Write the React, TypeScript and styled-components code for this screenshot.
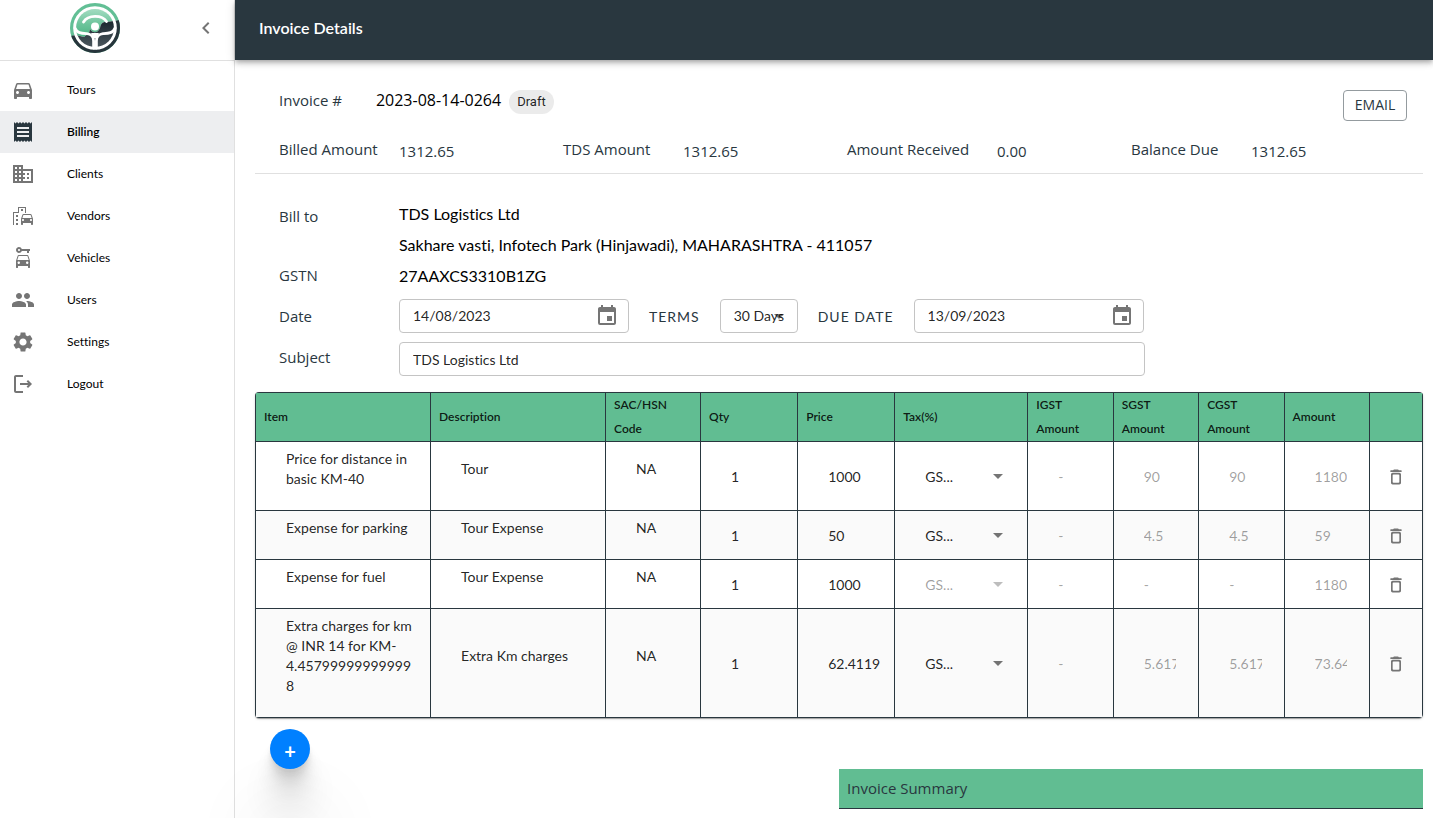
import React from "react";
import styled, { createGlobalStyle, css } from "styled-components";
import {
  MdArrowDropDown,
  MdCarRental,
  MdChevronLeft,
  MdDirectionsCar,
  MdDomain,
  MdEmojiTransportation,
  MdEvent,
  MdPeople,
  MdReceipt,
  MdSettings,
} from "react-icons/md";

const ink = "#29373f";
const green = "#61bd92";
const grey = "#757575";
const lato = `Lato, "Liberation Sans", sans-serif`;
const humanist = `"Open Sans", "Noto Sans", sans-serif`;

const GlobalStyle = createGlobalStyle`
  *, *::before, *::after { box-sizing: border-box; }
  body {
    margin: 0;
    background: #fff;
    color: rgba(0, 0, 0, 0.87);
    font-family: ${lato};
    font-variant-ligatures: none;
  }
  button, input, select {
    margin: 0;
    color: inherit;
    font-family: inherit;
    font-variant-ligatures: none;
  }
`;

const Shell = styled.div`
  display: flex;
  min-height: 100vh;
`;

const Sidebar = styled.aside`
  flex: 0 0 235px;
  border-right: 1px solid #e0e0e0;
`;

const Brand = styled.div`
  display: flex;
  align-items: flex-start;
  justify-content: flex-end;
  gap: 74px;
  height: 61px;
  padding: 3px 16px 0 0;
  border-bottom: 1px solid #e0e0e0;
`;

const CollapseButton = styled.button`
  display: flex;
  padding: 13px 0;
  border: 0;
  background: none;
  color: ${grey};
  font-size: 24px;
`;

const Nav = styled.nav`
  padding-top: 8px;
`;

const NavLink = styled.a<{ $active?: boolean }>`
  display: flex;
  align-items: center;
  gap: 32px;
  height: 42px;
  padding-left: 11px;
  color: #000;
  font-size: 12px;
  font-weight: ${(p) => (p.$active ? 600 : 400)};
  text-decoration: none;
  background: ${(p) => (p.$active ? "#edeef0" : "transparent")};

  svg {
    width: 24px;
    height: 24px;
    color: ${(p) => (p.$active ? ink : grey)};
  }
`;

const NavText = styled.span`
  padding-bottom: 2px;
`;

const Main = styled.main`
  flex: 1;
  min-width: 0;
`;

const TopBar = styled.header`
  position: relative;
  display: flex;
  align-items: center;
  height: 60px;
  padding: 0 24px 5px;
  background: ${ink};
  color: #fff;
  box-shadow: 0 2px 4px -1px rgba(0, 0, 0, 0.2), 0 4px 5px rgba(0, 0, 0, 0.14),
    0 1px 10px rgba(0, 0, 0, 0.12);
`;

const Title = styled.h1`
  margin: 0;
  font-size: 16px;
  font-weight: 600;
`;

const Content = styled.div`
  padding: 26px 10px 9px 20px;
`;

const InvoiceHead = styled.section`
  padding: 0 8px 0 24px;
  border-bottom: 1px solid #e0e0e0;
`;

const IdRow = styled.div`
  display: flex;
  align-items: flex-start;
  padding: 4px 8px 8px 0;
`;

const Label = styled.span`
  font-family: ${humanist};
  font-size: 15px;
  line-height: 24px;
  color: ${ink};
`;

const FieldLabel = styled(Label).attrs({ as: "label" })<{ htmlFor?: string }>``;

const InvoiceLabel = styled(Label)`
  line-height: 20px;
`;

const InvoiceNumber = styled(InvoiceLabel)`
  margin: 0 8px 0 34px;
  font-size: 16px;
  color: #000;
`;

const Chip = styled.span`
  height: 24px;
  padding: 0 8px;
  border-radius: 12px;
  background: #ebebeb;
  font-family: Roboto, sans-serif;
  font-size: 13px;
  line-height: 24px;
`;

const EmailButton = styled.button`
  width: 64px;
  height: 31px;
  margin-left: auto;
  padding: 0 0 2px;
  border: 1px solid #949b9f;
  border-radius: 4px;
  background: #fff;
  color: ${ink};
  font-family: ${humanist};
  font-size: 14px;
`;

const Totals = styled.div`
  display: grid;
  grid-template-columns: repeat(4, 1fr);
  height: 44px;
  padding-top: 8px;
`;

const Total = styled.div<{ $labelWidth: number }>`
  display: grid;
  grid-template-columns: ${(p) => p.$labelWidth}px 1fr;
`;

const TotalValue = styled(Label)`
  padding-top: 2px;
`;

const Details = styled.section`
  display: grid;
  grid-template-columns: 120px minmax(0, 746px);
  padding: 24px 0 16px 24px;
`;

const LabelColumn = styled.div`
  display: flex;
  flex-direction: column;
  justify-content: space-between;
  padding: 6px 0 7px;
`;

const LabelGroup = styled.div`
  display: flex;
  flex-direction: column;
  gap: 17px;
`;

const ValueColumn = styled.div`
  display: flex;
  flex-direction: column;
`;

const Facts = styled.div`
  padding-bottom: 3px;
`;

const Fact = styled.div`
  font-size: 16px;
  line-height: 31px;
  color: #000;
`;

const Fields = styled.div`
  display: flex;
  align-items: center;
  gap: 20px;
  padding: 5px 0 9px;
`;

const boxStyle = css`
  height: 34px;
  border: 1px solid #c4c4c4;
  border-radius: 4px;
  background: #fff;
`;

const DateBox = styled.div`
  ${boxStyle}
  display: flex;
  flex: 0 1 230px;
  align-items: center;
  padding: 0 9px 0 13px;
`;

const DateInput = styled.input`
  flex: 1;
  min-width: 0;
  padding: 0 0 2px;
  border: 0;
  outline: 0;
  background: none;
  font-size: 14px;
`;

const IconButton = styled.button`
  display: inline-flex;
  padding: 0;
  border: 0;
  background: none;
  color: ${grey};
  vertical-align: middle;
`;

const OverlineLabel = styled.label`
  font-size: 14px;
  letter-spacing: 1px;
  text-transform: uppercase;
  white-space: nowrap;
  color: ${ink};
`;

const TermsBox = styled.div`
  ${boxStyle}
  position: relative;
  flex: 0 0 78px;

  svg {
    position: absolute;
    top: 4px;
    right: 6px;
    color: rgba(0, 0, 0, 0.54);
    pointer-events: none;
  }
`;

const TermsSelect = styled.select`
  appearance: none;
  width: 100%;
  height: 100%;
  padding: 0 0 2px 13px;
  border: 0;
  outline: 0;
  background: none;
  font-size: 14px;
`;

const SubjectInput = styled.input`
  ${boxStyle}
  width: 100%;
  padding: 0 13px;
  outline: 0;
  font-size: 14px;
`;

const TableCard = styled.div`
  overflow: hidden;
  border-radius: 4px;
  box-shadow: 0 2px 1px -1px rgba(0, 0, 0, 0.2), 0 1px 1px rgba(0, 0, 0, 0.14),
    0 1px 3px rgba(0, 0, 0, 0.12);
`;

const ItemTable = styled.table`
  width: 100%;
  table-layout: fixed;
  border-collapse: collapse;
  font-size: 14px;
  line-height: 20px;

  tbody tr:nth-child(even) {
    background: #fafafa;
  }
`;

const HeadCell = styled.th`
  height: 49px;
  padding: 0 8px;
  border: 1px solid ${ink};
  background: ${green};
  font-size: 12px;
  font-weight: 600;
  line-height: 24px;
  text-align: left;
`;

const TextCell = styled.td`
  padding: 7px 14px 21px 30px;
  border: 1px solid ${ink};
  overflow-wrap: anywhere;
`;

const InputCell = styled.td<{ $right?: number }>`
  padding: 0 ${(p) => p.$right ?? 13}px 0 30px;
  border: 1px solid ${ink};
`;

const CellInput = styled.input`
  display: block;
  width: 100%;
  height: 20px;
  padding: 0;
  border: 0;
  outline: 0;
  background: none;
  font-size: 14px;

  &:disabled {
    color: rgba(0, 0, 0, 0.38);
  }
`;

const TaxBox = styled.div<{ $off?: boolean }>`
  display: flex;
  align-items: center;
  color: ${(p) => (p.$off ? "rgba(0, 0, 0, 0.38)" : "inherit")};

  svg {
    flex: none;
    color: ${(p) => (p.$off ? "rgba(0, 0, 0, 0.26)" : "rgba(0, 0, 0, 0.54)")};
  }
`;

const TaxSelect = styled.select`
  appearance: none;
  flex: 1;
  min-width: 0;
  height: 24px;
  padding: 0;
  border: 0;
  outline: 0;
  background: none;
  font-size: 14px;
  opacity: 1;
`;

const ActionCell = styled.td`
  padding: 0;
  border: 1px solid ${ink};
  text-align: center;
`;

const AddButton = styled.button`
  display: block;
  width: 40px;
  height: 40px;
  margin: 11px 0 0 15px;
  padding: 4px 0 0;
  border: 0;
  border-radius: 50%;
  background: #0080ff;
  color: #fff;
  font-size: 20px;
  font-weight: 700;
  line-height: 36px;
  box-shadow: 0 3px 2px rgba(0, 0, 0, 0.03), 0 7px 5px rgba(0, 0, 0, 0.05),
    0 13px 10px rgba(0, 0, 0, 0.06), 0 22px 18px rgba(0, 0, 0, 0.07),
    0 42px 33px rgba(0, 0, 0, 0.09), 0 90px 80px 8px rgba(0, 0, 0, 0.12);
`;

const Summary = styled.section`
  width: 50%;
  margin-left: auto;
`;

const SummaryTitle = styled.h2`
  margin: 0;
  height: 40px;
  padding: 0 8px;
  border-bottom: 1px solid ${ink};
  background: ${green};
  color: ${ink};
  font-family: ${humanist};
  font-size: 15px;
  font-weight: 400;
  line-height: 39px;
`;

const LogoutIcon = () => (
  <svg viewBox="0 0 24 24" fill="currentColor" aria-hidden="true">
    <path d="M17 8l-1.41 1.41L17.17 11H9v2h8.17l-1.58 1.58L17 16l4-4-4-4zM5 5h7V3H5c-1.1 0-2 .9-2 2v14c0 1.1.9 2 2 2h7v-2H5V5z" />
  </svg>
);

const TrashIcon = () => (
  <svg width="20" height="20" viewBox="0 0 24 24" fill="currentColor" aria-hidden="true">
    <path d="M6 19c0 1.1.9 2 2 2h8c1.1 0 2-.9 2-2V9c0-1.1-.9-2-2-2H8c-1.1 0-2 .9-2 2v10zM9 9h6c.55 0 1 .45 1 1v8c0 .55-.45 1-1 1H9c-.55 0-1-.45-1-1v-8c0-.55.45-1 1-1zm6.5-5l-.71-.71c-.18-.18-.44-.29-.7-.29H9.91c-.26 0-.52.11-.7.29L8.5 4H6c-.55 0-1 .45-1 1s.45 1 1 1h12c.55 0 1-.45 1-1s-.45-1-1-1h-2.5z" />
  </svg>
);

const Logo = () => (
  <svg width="50" height="50" viewBox="0 0 50 50" role="img" aria-label="Steering wheel">
    <defs>
      <linearGradient id="leaf" x1="0" y1="0" x2="0" y2="1">
        <stop offset="0" stopColor="#a3dcc1" />
        <stop offset="0.4" stopColor="#6cc49b" />
        <stop offset="0.7" stopColor="#4fb586" />
      </linearGradient>
      <linearGradient id="slate" x1="0" y1="0" x2="0" y2="1">
        <stop offset="0.4" stopColor="#1f2c33" />
        <stop offset="1" stopColor="#4a565d" />
      </linearGradient>
      <clipPath id="lower">
        <path d="M0 33 L6 32 L14 34 L19 30 L20 26 C23 31 28 30 30 25 C31 19 34 19 37 19 L50 17 V50 H0Z" />
      </clipPath>
    </defs>
    <circle cx="25" cy="25" r="23.4" fill="#fff" stroke="#62bf95" strokeWidth="3.2" />
    <circle cx="25" cy="25" r="19" fill="url(#leaf)" />
    <g clipPath="url(#lower)">
      <circle cx="25" cy="25" r="23.4" fill="#fff" stroke="#27353c" strokeWidth="3.2" />
      <circle cx="25" cy="25" r="19" fill="url(#slate)" />
    </g>
    <g fill="none" stroke="#fff" strokeLinecap="round">
      <path d="M13.5 19 C18 11.6 32 11.6 36.500 18.500" strokeWidth="2.800" />
      <path d="M5 25 C7 30.500 12 30.400 17 30.600 C21 31 23.600 34 23.600 38 V45" strokeWidth="2.800" />
      <path d="M45 25 C43 30.500 38 30.400 33 30.600 C29 31 26.400 34 26.400 38 V45" strokeWidth="2.800" />
    </g>
    <path d="M21 30 H29 L26.500 35 H23.500Z" fill="#fff" />
    <circle cx="25" cy="23.400" r="4" fill="#fff" />
  </svg>
);

const navItems = [
  { name: "Tours", icon: <MdDirectionsCar /> },
  { name: "Billing", icon: <MdReceipt />, active: true },
  { name: "Clients", icon: <MdDomain /> },
  { name: "Vendors", icon: <MdEmojiTransportation /> },
  { name: "Vehicles", icon: <MdCarRental /> },
  { name: "Users", icon: <MdPeople /> },
  { name: "Settings", icon: <MdSettings /> },
  { name: "Logout", icon: <LogoutIcon /> },
];

const totals = [
  { name: "Billed Amount", value: "1312.65", width: 120 },
  { name: "TDS Amount", value: "1312.65", width: 120 },
  { name: "Amount Received", value: "0.00", width: 150 },
  { name: "Balance Due", value: "1312.65", width: 120 },
];

const columns = [
  { name: "Item", width: "15%" },
  { name: "Description", width: "15%" },
  { name: "SAC/HSN Code", width: "8.14%" },
  { name: "Qty", width: "8.32%" },
  { name: "Price", width: "8.32%" },
  { name: "Tax(%)", width: "11.4%" },
  { name: "IGST Amount", width: "7.32%" },
  { name: "SGST Amount", width: "7.32%" },
  { name: "CGST Amount", width: "7.32%" },
  { name: "Amount", width: "7.32%" },
  { name: "", width: "4.54%" },
];

const rows = [
  { item: "Price for distance in basic KM-40", about: "Tour", price: "1000", amounts: ["-", "90", "90", "1180"] },
  { item: "Expense for parking", about: "Tour Expense", price: "50", amounts: ["-", "4.5", "4.5", "59"] },
  { item: "Expense for fuel", about: "Tour Expense", price: "1000", taxOff: true, amounts: ["-", "-", "-", "1180"] },
  {
    item: "Extra charges for km @ INR 14 for KM-4.457999999999998",
    about: "Extra Km charges",
    price: "62.4119",
    amounts: ["-", "5.6171", "5.6171", "73.646"],
  },
];

export default function App() {
  return (
    <Shell>
      <GlobalStyle />
      <Sidebar>
        <Brand>
          <Logo />
          <CollapseButton type="button" aria-label="Collapse menu">
            <MdChevronLeft />
          </CollapseButton>
        </Brand>
        <Nav>
          {navItems.map((n) => (
            <NavLink key={n.name} href="#" $active={n.active}>
              {n.icon}
              <NavText>{n.name}</NavText>
            </NavLink>
          ))}
        </Nav>
      </Sidebar>
      <Main>
        <TopBar>
          <Title>Invoice Details</Title>
        </TopBar>
        <Content>
          <InvoiceHead>
            <IdRow>
              <InvoiceLabel>Invoice #</InvoiceLabel>
              <InvoiceNumber>2023-08-14-0264</InvoiceNumber>
              <Chip>Draft</Chip>
              <EmailButton type="button">EMAIL</EmailButton>
            </IdRow>
            <Totals>
              {totals.map((t) => (
                <Total key={t.name} $labelWidth={t.width}>
                  <Label>{t.name}</Label>
                  <TotalValue>{t.value}</TotalValue>
                </Total>
              ))}
            </Totals>
          </InvoiceHead>
          <Details>
            <LabelColumn>
              <Label>Bill to</Label>
              <LabelGroup>
                <Label>GSTN</Label>
                <FieldLabel htmlFor="date">Date</FieldLabel>
                <FieldLabel htmlFor="subject">Subject</FieldLabel>
              </LabelGroup>
            </LabelColumn>
            <ValueColumn>
              <Facts>
                <Fact>TDS Logistics Ltd</Fact>
                <Fact>Sakhare vasti, Infotech Park (Hinjawadi), MAHARASHTRA - 411057</Fact>
                <Fact>27AAXCS3310B1ZG</Fact>
              </Facts>
              <Fields>
                <DateBox>
                  <DateInput id="date" defaultValue="14/08/2023" />
                  <IconButton type="button" aria-label="Choose date">
                    <MdEvent size={24} />
                  </IconButton>
                </DateBox>
                <OverlineLabel htmlFor="terms">Terms</OverlineLabel>
                <TermsBox>
                  <TermsSelect id="terms">
                    <option>30 Days</option>
                  </TermsSelect>
                  <MdArrowDropDown size={24} />
                </TermsBox>
                <OverlineLabel htmlFor="due">Due date</OverlineLabel>
                <DateBox>
                  <DateInput id="due" defaultValue="13/09/2023" />
                  <IconButton type="button" aria-label="Choose due date">
                    <MdEvent size={24} />
                  </IconButton>
                </DateBox>
              </Fields>
              <SubjectInput id="subject" defaultValue="TDS Logistics Ltd" />
            </ValueColumn>
          </Details>
          <TableCard>
            <ItemTable>
              <colgroup>
                {columns.map((c, i) => (
                  <col key={i} width={c.width} />
                ))}
              </colgroup>
              <thead>
                <tr>
                  {columns.map((c, i) => (
                    <HeadCell key={i} scope="col">
                      {c.name}
                    </HeadCell>
                  ))}
                </tr>
              </thead>
              <tbody>
                {rows.map((r) => (
                  <tr key={r.item}>
                    <TextCell>{r.item}</TextCell>
                    <TextCell>{r.about}</TextCell>
                    <TextCell>NA</TextCell>
                    <InputCell>
                      <CellInput aria-label="Quantity" defaultValue="1" />
                    </InputCell>
                    <InputCell>
                      <CellInput aria-label="Price" defaultValue={r.price} />
                    </InputCell>
                    <InputCell $right={17}>
                      <TaxBox $off={r.taxOff}>
                        <TaxSelect aria-label="Tax" disabled={r.taxOff}>
                          <option>GS...</option>
                        </TaxSelect>
                        <MdArrowDropDown size={24} />
                      </TaxBox>
                    </InputCell>
                    {r.amounts.map((a, i) => (
                      <InputCell key={i} $right={22}>
                        <CellInput aria-label={columns[i + 6].name} defaultValue={a} disabled />
                      </InputCell>
                    ))}
                    <ActionCell>
                      <IconButton type="button" aria-label="Delete item">
                        <TrashIcon />
                      </IconButton>
                    </ActionCell>
                  </tr>
                ))}
              </tbody>
            </ItemTable>
          </TableCard>
          <AddButton type="button" aria-label="Add item">
            +
          </AddButton>
          <Summary>
            <SummaryTitle>Invoice Summary</SummaryTitle>
          </Summary>
        </Content>
      </Main>
    </Shell>
  );
}
